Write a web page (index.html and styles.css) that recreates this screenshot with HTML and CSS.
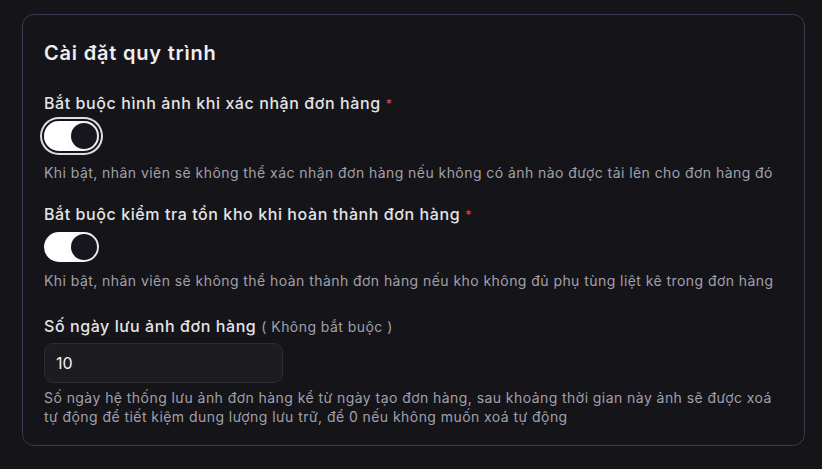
FILE: index.html
```html
<!DOCTYPE html>
<html lang="vi">
<head>
<meta charset="utf-8">
<link rel="stylesheet" href="styles.css">
</head>
<body>
<div class="card">
  <h2 class="title">Cài đặt quy trình</h2>

  <div class="field field-first">
    <div class="label">Bắt buộc hình ảnh khi xác nhận đơn hàng<span class="req">*</span></div>
    <div class="switch switch-focus"><span class="knob"></span></div>
    <p class="help help-first">Khi bật, nhân viên sẽ không thể xác nhận đơn hàng nếu không có ảnh nào được tải lên cho đơn hàng đó</p>
  </div>

  <div class="field">
    <div class="label">Bắt buộc kiểm tra tồn kho khi hoàn thành đơn hàng<span class="req">*</span></div>
    <div class="switch"><span class="knob"></span></div>
    <p class="help">Khi bật, nhân viên sẽ không thể hoàn thành đơn hàng nếu kho không đủ phụ tùng liệt kê trong đơn hàng</p>
  </div>

  <div class="field field-last">
    <div class="label">Số ngày lưu ảnh đơn hàng<span class="optional">( Không bắt buộc )</span></div>
    <div class="input">10</div>
    <p class="help help-input">Số ngày hệ thống lưu ảnh đơn hàng kể từ ngày tạo đơn hàng, sau khoảng thời gian này ảnh sẽ được xoá tự động để tiết kiệm dung lượng lưu trữ, để 0 nếu không muốn xoá tự động</p>
  </div>
</div>
</body>
</html>
```
FILE: styles.css
```css
* { box-sizing: border-box; }
html, body { margin: 0; }
body {
  background: #151419;
  font-family: Inter, "Noto Sans", sans-serif;
  padding: 14px 17px 23px 22px;
  width: 822px;
  height: 469px;
}
.card {
  border: 1px solid #363c4d;
  border-radius: 12px;
  width: 783px;
  height: 432px;
  padding: 24px 22px 20px 21px;
}
.title {
  margin: 0;
  font-size: 20px;
  line-height: 28px;
  font-weight: 600;
  color: #eeeef0;
  letter-spacing: 0.8px;
}
.field { margin-top: 19px; }
.field-first { margin-top: 24px; }
.field-last { margin-top: 23px; }
.label {
  font-size: 16px;
  line-height: 24px;
  font-weight: 500;
  color: #e4e4e7;
  letter-spacing: 0.58px;
}
.req {
  color: #e53e3e;
  font-size: 12px;
  margin-left: 5px;
  vertical-align: 1px;
  letter-spacing: 0;
}
.optional {
  font-size: 14px;
  font-weight: 400;
  color: #a1a1aa;
  margin-left: 5px;
  letter-spacing: 0.45px;
}
.switch {
  margin-top: 5px;
  width: 55px;
  height: 30px;
  border-radius: 15px;
  background: linear-gradient(90deg, #ffffff 40%, #e9e8f0);
  padding: 2px;
  display: flex;
  justify-content: flex-end;
}
.switch-focus {
  box-shadow: 0 0 0 2px #151419, 0 0 0 4px #dedee2;
}
.knob {
  width: 26px;
  height: 26px;
  border-radius: 50%;
  background: #17161c;
}
.help {
  margin: 9px 0 0;
  font-size: 14px;
  line-height: 20px;
  color: #a1a1aa;
  letter-spacing: 0.44px;
}
.help-first { margin-top: 12px; }
.input {
  margin-top: 4px;
  width: 239px;
  height: 40px;
  border: 1px solid #2c2c33;
  border-radius: 9px;
  background: #1c1c21;
  color: #f4f4f5;
  font-size: 16px;
  line-height: 38px;
  padding: 0 11px;
}
.help-input { margin-top: 5px; line-height: 19px; }
```
